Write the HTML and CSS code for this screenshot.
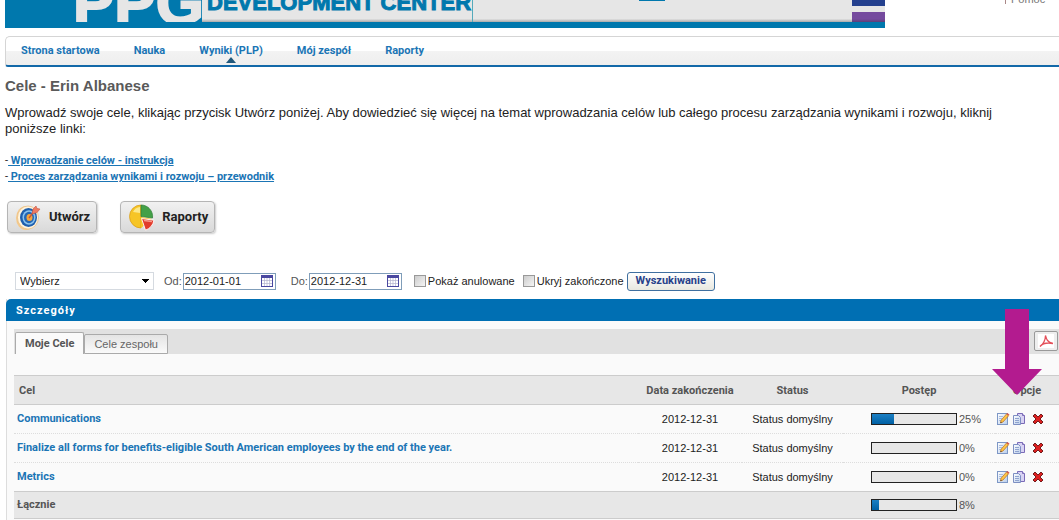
FILE: index.html
```html
<!DOCTYPE html>
<html lang="pl">
<head>
<meta charset="utf-8">
<meta name="viewport" content="width=device-width, initial-scale=1">
<title>Cele - Erin Albanese</title>
<link rel="stylesheet" href="styles.css">
</head>
<body>
<svg class="sprites" aria-hidden="true">
  <defs>
    <linearGradient id="paper" x1="0" y1="0" x2="1" y2="1"><stop offset="0" stop-color="#fff"/><stop offset="1" stop-color="#b9cdea"/></linearGradient>
    <symbol id="edit" viewBox="0 0 14 14">
      <rect x="1.5" y="1.5" width="10" height="11" fill="url(#paper)" stroke="#7d97c6"/>
      <path d="M3 4.5h4M3 6.500h3M3 8.500h2" stroke="#a9bcdd"/>
      <path d="M4.500 11l.6-2.800L10.500 2l2 1.800-5.600 6.300z" fill="#ffc544" stroke="#b46a1d" stroke-width=".7"/>
      <path d="M10.500 2l1-1 2 1.800-1 1z" fill="#d9534a"/>
      <path d="M4.500 11l.3-1.300 1 .9z" fill="#222"/>
    </symbol>
    <symbol id="copy" viewBox="0 0 14 14">
      <path d="M5.500 1.500h5l2 2v8h-7z" fill="#d9d3f3" stroke="#7b6bb8"/>
      <path d="M10.500 1.500v2h2" fill="#fff" stroke="#7b6bb8"/>
      <path d="M1.500 3.500h5l2 2v7h-7z" fill="url(#paper)" stroke="#7d8fc2"/>
      <path d="M3 6.500h4M3 8.500h4M3 10.500h4" stroke="#8fa3cf"/>
    </symbol>
    <symbol id="remove" viewBox="0 0 14 14">
      <path d="M2 4l2-2 3 3 3-3 2 2-3 3 3 3-2 2-3-3-3 3-2-2 3-3z" fill="#dc2020" stroke="#651010" stroke-width=".9"/>
    </symbol>
    <symbol id="calendar" viewBox="0 0 12 12">
      <rect x=".5" y=".5" width="11" height="11" fill="#fff" stroke="#4a48a0"/>
      <path d="M0 1.500h12" stroke="#4a48a0" stroke-width="3"/>
      <path d="M3.500 3v8M6 3v8M8.500 3v8M1 5.500h10M1 8.500h10" stroke="#b3b3cf" stroke-width=".7"/>
    </symbol>
  </defs>
</svg>

<header class="top">
  <div class="banner">
    <div class="logo">PPG</div>
    <div class="product">DEVELOPMENT CENTER</div>
    <div class="stage"><span class="stage-mark"></span></div>
    <div class="swatches"><span class="navy"></span><span class="purple"></span></div>
  </div>
  <div class="help"><a href="#">Pomoc</a></div>
</header>

<nav class="menu">
  <a href="#">Strona startowa</a>
  <a href="#">Nauka</a>
  <a href="#" class="current">Wyniki (PLP)</a>
  <a href="#">Mój zespół</a>
  <a href="#">Raporty</a>
</nav>

<main>
  <section class="intro">
    <h1>Cele - Erin Albanese</h1>
    <p>Wprowadź swoje cele, klikając przycisk Utwórz poniżej. Aby dowiedzieć się więcej na temat wprowadzania celów lub całego procesu zarządzania wynikami i rozwoju, kliknij poniższe linki:</p>
    <ul class="guides">
      <li>-<a href="#"> Wprowadzanie celów - instrukcja</a></li>
      <li>-<a href="#"> Proces zarządzania wynikami i rozwoju – przewodnik</a></li>
    </ul>
    <div class="actions">
      <button type="button" class="action">
        <svg width="28" height="28" viewBox="0 0 28 28" aria-hidden="true">
          <ellipse cx="11" cy="15" rx="10" ry="12" fill="#f4c98a"/>
          <ellipse cx="13" cy="14.500" rx="10.500" ry="11.500" fill="#fff4dd" stroke="#e5b77c" stroke-width=".7"/>
          <ellipse cx="13.500" cy="14.500" rx="8.500" ry="9.500" fill="#1f5fae"/>
          <ellipse cx="14" cy="14.500" rx="6.500" ry="7.300" fill="#8cc4ee"/>
          <ellipse cx="14" cy="14.500" rx="5" ry="5.800" fill="#2467b4"/>
          <ellipse cx="14.500" cy="14.500" rx="3" ry="3.600" fill="#f6a53b"/>
          <path d="M14 15l6-8" stroke="#c6543f" stroke-width="1.300"/>
          <path d="M17 11l1-5 3-3 1 2.500 3 .5-3 3.500z" fill="#ee7a62" stroke="#c6543f" stroke-width=".6"/>
        </svg>
        <span>Utwórz</span>
      </button>
      <button type="button" class="action">
        <svg width="28" height="28" viewBox="0 0 28 28" aria-hidden="true">
          <path d="M13 14V25A11.500 11.500 0 1 1 13 2z" fill="#f6c526" stroke="#d79a18" stroke-width=".7"/>
          <path d="M5 9a9 9 0 0 1 7-5v6z" fill="#fbe88a"/>
          <path d="M13 13.500V2A11.500 11.500 0 0 1 24.500 15z" fill="#43a047" stroke="#2f7d36" stroke-width=".7"/>
          <path d="M13 25V14l11 2z" fill="#f6c526"/>
          <path d="M13.500 15.500l12.500 1.700q-1.500 7.500-8.500 10z" fill="#e23b2c" stroke="#fff" stroke-width=".9"/>
          <path d="M16 17.500l8 1" stroke="#f59a8d" stroke-width="1.500"/>
        </svg>
        <span>Raporty</span>
      </button>
    </div>
  </section>

  <form class="filters">
    <select aria-label="Wybierz"><option>Wybierz</option></select>
    <div class="date"><label for="from">Od:</label><span class="datebox"><input id="from" type="text" value="2012-01-01"><svg width="12" height="12" aria-hidden="true"><use href="#calendar"/></svg></span></div>
    <div class="date"><label for="to">Do:</label><span class="datebox"><input id="to" type="text" value="2012-12-31"><svg width="12" height="12" aria-hidden="true"><use href="#calendar"/></svg></span></div>
    <label class="check"><input type="checkbox">Pokaż anulowane</label>
    <label class="check"><input type="checkbox">Ukryj zakończone</label>
    <button type="button" class="search">Wyszukiwanie</button>
  </form>

  <section class="panel">
    <h2>Szczegóły</h2>
    <div class="tabs">
      <button type="button" class="tab active">Moje Cele</button>
      <button type="button" class="tab">Cele zespołu</button>
      <button type="button" class="pdf" aria-label="PDF">
        <svg width="18" height="14" viewBox="0 0 18 14" aria-hidden="true">
          <rect x="1" width="16" height="14" fill="#fff"/>
          <path d="M8.500 1.500C9.500 5 10 8 16 9.500 11 8.500 6 9 3 12.500 6 11 8.500 6 8.500 1.500z" fill="none" stroke="#e4505a" stroke-width="1.300"/>
        </svg>
      </button>
    </div>
    <table>
      <colgroup><col><col class="c-date"><col class="c-status"><col class="c-progress"><col class="c-options"></colgroup>
      <thead>
        <tr><th class="name">Cel</th><th>Data zakończenia</th><th>Status</th><th>Postęp</th><th>Opcje</th></tr>
      </thead>
      <tbody>
        <tr>
          <td class="name"><a href="#">Communications</a></td><td>2012-12-31</td><td>Status domyślny</td>
          <td><div class="progress"><span class="bar"><span style="width:26%"></span></span>25%</div></td>
          <td><div class="icons"><a href="#" aria-label="Edytuj"><svg><use href="#edit"/></svg></a><a href="#" aria-label="Kopiuj"><svg><use href="#copy"/></svg></a><a href="#" aria-label="Usuń"><svg><use href="#remove"/></svg></a></div></td>
        </tr>
        <tr>
          <td class="name"><a href="#">Finalize all forms for benefits-eligible South American employees by the end of the year.</a></td><td>2012-12-31</td><td>Status domyślny</td>
          <td><div class="progress"><span class="bar"><span style="width:0%"></span></span>0%</div></td>
          <td><div class="icons"><a href="#" aria-label="Edytuj"><svg><use href="#edit"/></svg></a><a href="#" aria-label="Kopiuj"><svg><use href="#copy"/></svg></a><a href="#" aria-label="Usuń"><svg><use href="#remove"/></svg></a></div></td>
        </tr>
        <tr>
          <td class="name"><a href="#">Metrics</a></td><td>2012-12-31</td><td>Status domyślny</td>
          <td><div class="progress"><span class="bar"><span style="width:0%"></span></span>0%</div></td>
          <td><div class="icons"><a href="#" aria-label="Edytuj"><svg><use href="#edit"/></svg></a><a href="#" aria-label="Kopiuj"><svg><use href="#copy"/></svg></a><a href="#" aria-label="Usuń"><svg><use href="#remove"/></svg></a></div></td>
        </tr>
      </tbody>
      <tfoot>
        <tr><td class="name">Łącznie</td><td></td><td></td>
          <td><div class="progress"><span class="bar"><span style="width:8%"></span></span>8%</div></td><td></td></tr>
      </tfoot>
    </table>
    <svg class="pointer" width="50" height="86" viewBox="0 0 50 86" aria-hidden="true"><path d="M13 0h24v60h13L25 86 0 60h13z" fill="#b31b8f"/></svg>
  </section>
</main>
</body>
</html>
```
FILE: styles.css
```css
* { box-sizing: border-box; }
:root {
  --text: "Liberation Sans", Arial, sans-serif;
  --strong: Roboto, "Liberation Sans", sans-serif;
}
body {
  margin: 0;
  overflow-x: hidden;
  background: #fff;
  color: #222;
  font: 11px/14px var(--text);
}
a { color: #1b75b5; font-weight: bold; }
.sprites { position: absolute; width: 0; height: 0; }

.top { display: flex; padding-left: 5px; }
.banner {
  display: flex;
  width: 880px;
  height: 28px;
  overflow: hidden;
  border-bottom: 6px solid #0078ad;
  background: linear-gradient(#e6e6e6 85%, #aaa);
}
.logo {
  display: flex;
  align-items: flex-end;
  width: 197px;
  padding-left: 68px;
  overflow: hidden;
  background: #0078ad;
  color: #e6e6e6;
  font: bold 62px/38px var(--text);
  -webkit-text-stroke: 2px #e6e6e6;
}
.product {
  display: flex;
  align-items: flex-end;
  width: 271px;
  padding: 0 0 8px 5px;
  border-right: 1px solid #5ab;
  color: #0078ad;
  font: bold 22px/22px var(--text);
  -webkit-text-stroke: 1px #0078ad;
  white-space: nowrap;
}
.stage { flex: 1; padding-left: 166px; }
.stage-mark { display: block; width: 26px; height: 1px; background: #0078ad; }
.swatches { display: flex; flex-direction: column; gap: 6px; width: 33px; }
.navy { height: 6px; background: #24408e; }
.purple { height: 10px; background: linear-gradient(#754a9e 70%, #5c4076); }
.help { height: 4px; margin-left: 120px; padding-left: 5px; border-left: 1px solid #a88; }
.help a { display: block; margin-top: -8px; color: #777; font-weight: normal; text-decoration: none; }

.menu {
  display: flex;
  gap: 34px;
  height: 31px;
  margin: 8px 0 0 5px;
  padding: 7px 15px 0;
  border: solid #d5d5d5;
  border-width: 1px 0 2px 1px;
  border-bottom-color: #1268a8;
  border-radius: 5px 0 0 3px;
  background: linear-gradient(#fff 50%, #f3f3f3 50%, #eee);
  font-family: var(--strong);
}
.menu a { text-decoration: none; }
.menu .current { position: relative; }
.current::after {
  content: "";
  position: absolute;
  left: 50%;
  bottom: 2px;
  margin-left: -5px;
  border: 5px solid transparent;
  border-top: 0;
  border-bottom: 6px solid #20587c;
}

.intro { padding: 10px 30px 0 5px; }
h1 { margin: 0 0 10px; color: #5a5a5a; font-size: 15px; line-height: 18px; }
.intro p { margin: 0; font-size: 13px; line-height: 16px; }
.guides { margin: 16px 0; padding: 0; list-style: none; font-family: var(--strong); line-height: 16px; }
.actions { display: flex; gap: 23px; padding-left: 2px; }
.action {
  display: flex;
  align-items: center;
  gap: 6px;
  height: 32px;
  padding: 0 6px 0 7px;
  border: 1px solid #b5b5b5;
  border-radius: 4px;
  background: linear-gradient(#f1f1f1, #d9d9d9);
  box-shadow: 1px 1px 2px #ccc;
  color: #222;
  font: bold 13px/16px var(--strong);
}

.filters { display: flex; align-items: center; height: 20px; margin: 38px 0 8px 15px; }
.filters select {
  appearance: none;
  width: 139px;
  height: 18px;
  padding: 0 4px;
  border: 1px solid #d5dae0;
  border-radius: 0;
  background:
    linear-gradient(45deg, transparent 50%, #000 50%) no-repeat right 7px center / 4px 4px,
    linear-gradient(135deg, #000 50%, transparent 50%) no-repeat right 3px center / 4px 4px,
    #fff;
  color: #222;
  font: 11px/14px var(--text);
}
.date { display: flex; align-items: center; gap: 1px; margin-left: 10px; color: #555; }
.date + .date { margin-left: 15px; }
.datebox { display: flex; align-items: center; width: 93px; height: 17px; padding-right: 2px; border: 1px solid #7f9db9; }
.datebox input { flex: 1; min-width: 0; padding: 0 1px; border: 0; background: none; color: #222; font: 11px/14px var(--text); }
.check { display: flex; align-items: center; gap: 2px; margin-left: 12px; white-space: nowrap; }
.check + .check { margin-left: 8px; }
.check input { appearance: none; width: 12px; height: 12px; margin: 0; border: 1px solid #999; background: linear-gradient(135deg, #ccc, #f5f5f5); }
.search {
  height: 19px;
  margin-left: 3px;
  padding: 0 8px;
  border: 1px solid #3f6f9f;
  border-radius: 3px;
  background: linear-gradient(#fff, #e8e8e0);
  color: #27418a;
  font: bold 11px/14px var(--strong);
}

.panel { position: relative; margin-left: 6px; padding-bottom: 4px; border-left: 1px solid #ddd; background: #fafafa; }
h2 {
  margin: 0 0 8px -1px;
  padding: 5px 10px 3px;
  border-radius: 5px 0 0 0;
  background: #006fb3;
  color: #fff;
  font: bold 11px/14px var(--strong);
  letter-spacing: 1px;
}
.tabs { display: flex; align-items: flex-end; height: 25px; margin: 0 0 21px 7px; padding-left: 1px; background: #e1e1e1; }
.tab {
  height: 20px;
  padding: 0 9px;
  border: 1px solid #aaa;
  border-radius: 2px 2px 0 0;
  background: linear-gradient(#e4e4e4, #fafafa);
  color: #666;
  font: 11px/14px var(--text);
}
.tab.active { height: 22px; border-bottom: 0; background: #fafafa; color: #555; font-family: var(--strong); font-weight: bold; }
.pdf { display: flex; align-items: center; justify-content: center; width: 24px; height: 20px; margin: 0 1px 3px auto; padding: 0; border: 1px solid #999; border-radius: 2px; background: #eee; }

table { width: calc(100% - 7px); margin-left: 7px; border-collapse: collapse; table-layout: fixed; }
.c-date { width: 104px; }
.c-status { width: 101px; }
.c-progress { width: 152px; }
.c-options { width: 64px; }
th, td { padding: 0; text-align: center; }
th { height: 29px; padding-top: 1px; color: #555; font-family: var(--strong); }
thead tr, tfoot tr { background: #e7e7e7; border-top: 1px solid #ccc; border-bottom: 1px solid #ccc; }
tbody td { height: 29px; border-top: 1px dotted #ddd; }
tfoot td { height: 27px; color: #555; font-weight: bold; }
.name { padding-left: 3px; font-family: var(--strong); text-align: left; }
th.name { padding-left: 5px; }
.name a { text-decoration: none; }
.progress { display: flex; align-items: center; gap: 2px; padding-left: 28px; color: #555; font-weight: normal; }
.bar { width: 86px; height: 12px; border: 1px solid #222; background: #e7e7e7; }
.bar span { display: block; height: 100%; background: linear-gradient(#1c80c4, #0060a4); }
.icons { display: flex; gap: 2px; padding-left: 1px; }
.icons svg { display: block; width: 14px; height: 14px; }
.icons a:last-child { margin-left: 3px; }
.pointer { position: absolute; top: 10px; right: 17px; }
```
